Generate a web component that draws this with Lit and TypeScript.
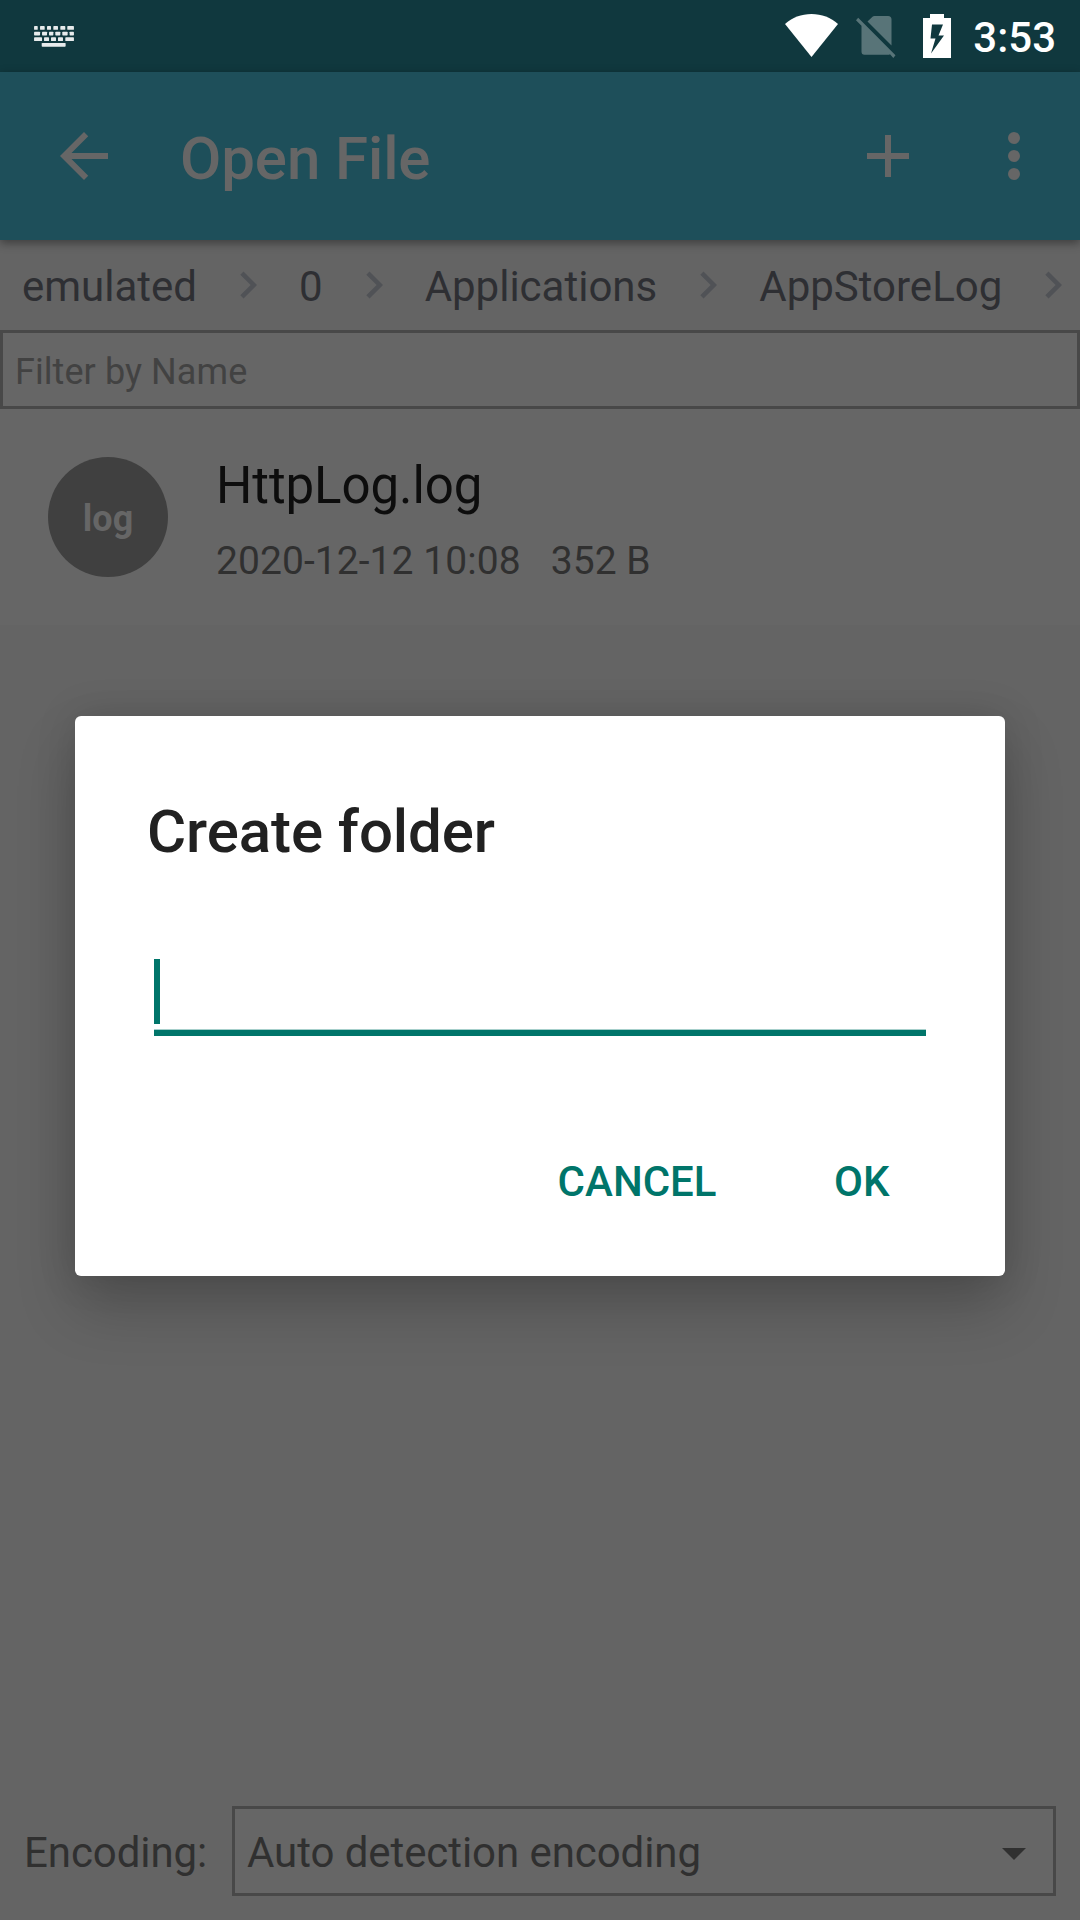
import { LitElement, html, css, svg } from "lit";
import { customElement, property } from "lit/decorators.js";

// Key caps of the keyboard glyph: x, y, width.
const KEYS: number[][] = [
  [102, 78, 11], [120, 78, 14], [141, 78, 12], [160, 78, 14], [181, 78, 15], [202, 78, 20],
  [102, 95, 18], [126, 95, 15], [147, 95, 13], [166, 95, 15], [187, 95, 16], [209, 95, 13],
  [102, 112, 24], [132, 112, 15], [153, 112, 15], [174, 112, 15], [196, 112, 26],
  [125, 129, 72],
];

@customElement("status-bar")
class StatusBar extends LitElement {
  static styles = css`
    :host { display: flex; align-items: flex-start; box-sizing: border-box; height: 72px; padding: 0 24px 0 34px; background: #10383e; color: #fff; }
    svg { display: block; flex: none; fill: currentColor; }
    .keyboard { margin-top: 25px; opacity: 0.9; }
    .right { display: flex; margin-left: auto; align-items: flex-start; }
    .wifi { margin: 14px 18px 0 0; }
    .sim { margin: 16px 27px 0 0; opacity: 0.3; }
    .battery { margin: 14px 22px 0 0; }
    .clock { font: 500 42px/49px Roboto, sans-serif; margin-top: 13px; }
  `;
  render() {
    return html`
      <svg class="keyboard" width="40" height="22.6" viewBox="102 75 120 68">
        ${KEYS.map(([x, y, w]) => svg`<rect x=${x} y=${y} width=${w} height="11.5" rx="2"></rect>`)}
      </svg>
      <div class="right">
        <svg class="wifi" width="53" height="43" viewBox="0 0 53 43"><path d="M26.5 43 L0 10 C7 3.5 16.5 0 26.5 0 S46 3.5 53 10 Z"></path></svg>
        <svg class="sim" width="40" height="42" viewBox="0 0 40 42">
          <path d="M11.5 5.5 L16.5 0.8 Q17.3 0 18.5 0 H32 Q35.5 0 35.5 3.5 V29.5 Z"></path>
          <path d="M2.2 1.8 L39.5 39.3 L37.3 42 L34 38.2 Q33 38.8 32 38.8 H8.500 Q5.500 38.800 5.500 35.500 V9.800 L0 4.200 Z"></path>
        </svg>
        <svg class="battery" width="28" height="44" viewBox="0 0 28 44"><path fill-rule="evenodd" d="M7 0 H21 V4 H28 V44 H0 V4 H7 Z M9 10.500 L7.500 24.500 H12.500 L8 39.500 L21 21.500 H15.500 L20 10.500 Z"></path></svg>
        <span class="clock">3:53</span>
      </div>`;
  }
}

@customElement("app-toolbar")
class AppToolbar extends LitElement {
  @property() heading = "";
  static styles = css`
    :host { display: flex; align-items: center; box-sizing: border-box; height: 168px; padding: 0 30px 0 48px; background: #1e4f5a; color: #666; box-shadow: 0 3px 9px rgba(0, 0, 0, 0.4); position: relative; z-index: 1; }
    svg { display: block; flex: none; fill: currentColor; }
    .title { font: 500 60px/71px Roboto, sans-serif; letter-spacing: -0.1px; margin: 5px auto 0 60px; }
    .add { margin-right: 54px; }
  `;
  render() {
    return html`
      <svg width="72" height="72" viewBox="0 0 24 24"><path d="M20 11H7.830l5.590-5.590L12 4l-8 8 8 8 1.410-1.410L7.830 13H20v-2z"></path></svg>
      <span class="title">${this.heading}</span>
      <svg class="add" width="72" height="72" viewBox="0 0 24 24"><path d="M19 13h-6v6h-2v-6H5v-2h6V5h2v6h6v2z"></path></svg>
      <svg width="72" height="72" viewBox="0 0 24 24"><circle cx="12" cy="6" r="2"></circle><circle cx="12" cy="12" r="2"></circle><circle cx="12" cy="18" r="2"></circle></svg>`;
  }
}

@customElement("path-crumbs")
class PathCrumbs extends LitElement {
  @property({ attribute: false }) parts: string[] = [];
  static styles = css`
    :host { display: flex; align-items: center; height: 90px; overflow: hidden; padding-left: 22px; color: #2e2f33; font: 42px/49px Roboto, sans-serif; }
    .crumb { flex: none; margin-top: 3px; }
    .sep { flex: none; margin: 0 24px; fill: #505256; }
  `;
  render() {
    return this.parts.map(
      (p) => html`<span class="crumb">${p}</span>
        <svg class="sep" width="54" height="54" viewBox="0 0 24 24"><path d="M10 6L8.590 7.410 13.170 12l-4.580 4.590L10 18l6-6z"></path></svg>`
    );
  }
}

@customElement("file-row")
class FileRow extends LitElement {
  @property() kind = "";
  @property() name = "";
  @property() date = "";
  @property() size = "";
  static styles = css`
    :host { display: flex; align-items: center; height: 216px; padding: 0 48px; background: #666; font-family: Roboto, sans-serif; }
    .badge { display: flex; align-items: center; justify-content: center; box-sizing: border-box; width: 120px; height: 120px; padding-top: 4px; margin-right: 48px; border-radius: 50%; background: #404040; color: #666; font-size: 36px; font-weight: 700; line-height: 42px; }
    .info { display: flex; flex-direction: column; gap: 23px; padding-top: 6px; }
    .name { font-size: 51px; line-height: 59px; letter-spacing: -0.08px; color: #0d0d0d; }
    .meta { display: flex; gap: 30px; font-size: 39px; line-height: 46px; letter-spacing: 0.06px; color: #303030; }
  `;
  render() {
    return html`
      <div class="badge">${this.kind}</div>
      <div class="info">
        <div class="name">${this.name}</div>
        <div class="meta"><span>${this.date}</span><span>${this.size}</span></div>
      </div>`;
  }
}

@customElement("folder-dialog")
class FolderDialog extends LitElement {
  static styles = css`
    :host { position: absolute; left: 75px; top: 716px; width: 930px; height: 560px; box-sizing: border-box; padding: 80px 72px 0; display: flex; flex-direction: column; border-radius: 6px; background: #fff; color: #212121; font-family: Roboto, sans-serif; box-shadow: 0 32px 60px rgba(0, 0, 0, 0.2), 0 0 40px rgba(0, 0, 0, 0.13); }
    .title { font-size: 60px; font-weight: 500; line-height: 71px; letter-spacing: -0.08px; }
    .field { display: flex; align-items: flex-start; margin: 92px 7px 0; height: 71px; border-bottom: 6px solid #00756a; box-shadow: inset 0 -1px 0 rgba(0, 117, 106, 0.35); }
    .caret { width: 6px; height: 65px; background: #00756a; }
    .actions { display: flex; justify-content: flex-end; gap: 117.5px; margin-top: 121px; padding-right: 43.5px; color: #00756a; font-size: 42px; font-weight: 500; line-height: 49px; }
  `;
  render() {
    return html`
      <div class="title">Create folder</div>
      <div class="field"><div class="caret"></div></div>
      <div class="actions"><span>CANCEL</span><span>OK</span></div>`;
  }
}

@customElement("app-root")
class AppRoot extends LitElement {
  static styles = css`
    :host { display: flex; flex-direction: column; position: relative; width: 1080px; height: 1920px; overflow: hidden; background: #646464; font-family: Roboto, sans-serif; }
    .filter { box-sizing: border-box; height: 79px; border: 3px solid #484848; background: #666; padding: 18px 12px 0; color: #424242; font-size: 36px; line-height: 42px; letter-spacing: 0.07px; }
    .footer { display: flex; align-items: center; margin-top: auto; padding: 0 24px; height: 138px; color: #303030; font-size: 42px; line-height: 49px; letter-spacing: -0.07px; }
    .label { width: 208px; padding-top: 3px; }
    .select { flex: 1; display: flex; align-items: center; justify-content: space-between; box-sizing: border-box; height: 90px; border: 3px solid #484848; background: #666; padding: 0 27px 0 12px; }
    .value { padding-top: 3px; }
    .arrow { display: block; fill: #303030; margin-top: 6px; }
  `;
  render() {
    return html`
      <status-bar></status-bar>
      <app-toolbar heading="Open File"></app-toolbar>
      <path-crumbs .parts=${["emulated", "0", "Applications", "AppStoreLog"]}></path-crumbs>
      <div class="filter">Filter by Name</div>
      <file-row kind="log" name="HttpLog.log" date="2020-12-12 10:08" size="352 B"></file-row>
      <div class="footer">
        <span class="label">Encoding:</span>
        <div class="select">
          <span class="value">Auto detection encoding</span>
          <svg class="arrow" width="24" height="12" viewBox="0 0 24 12"><path d="M0 0h24L12 12z"></path></svg>
        </div>
      </div>
      <folder-dialog></folder-dialog>`;
  }
}
